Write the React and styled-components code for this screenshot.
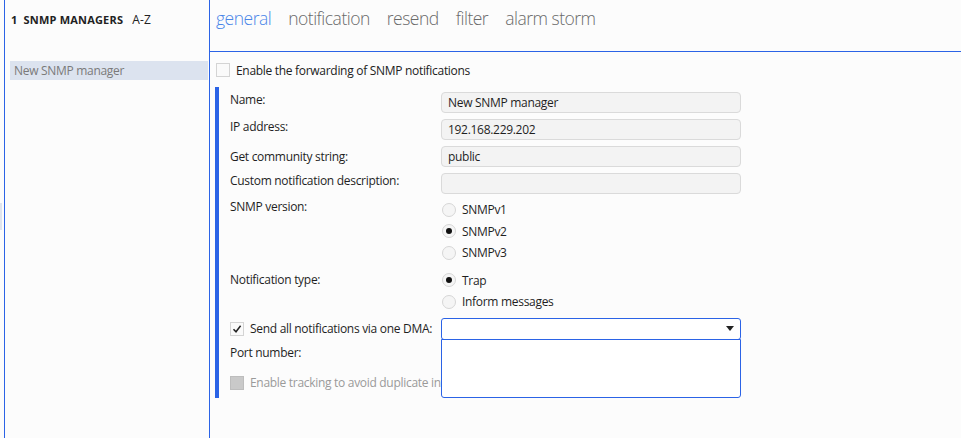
import React from "react";
import styled, { createGlobalStyle } from "styled-components";

const Global = createGlobalStyle`
  html, body { margin: 0; padding: 0; background: #fcfcfc; }
  body { font-family: "Open Sans", "Noto Sans", sans-serif; font-size: 12px; letter-spacing: -0.3px; color: #1f1f1f; }
  * { box-sizing: border-box; }
`;

const BLUE = "#2b63e6";

const Page = styled.div`
  display: flex;
  width: 961px;
  height: 438px;
  overflow: hidden;
  background: #fcfcfc;
`;

const EdgeStrip = styled.div`
  position: relative;
  width: 5px;
  flex: none;
  border-right: 1px solid ${BLUE};
`;

const EdgeSliver = styled.div`
  position: absolute;
  left: 0;
  top: 203px;
  width: 2px;
  height: 27px;
  background: #dfe4ee;
`;

const Sidebar = styled.aside`
  width: 205px;
  flex: none;
  border-right: 1px solid ${BLUE};
  padding: 0 1px 0 5px;
`;

const SideHeader = styled.div`
  height: 41px;
  display: flex;
  align-items: center;
  gap: 6px;
  padding: 0 0 2px 1px;
  font-size: 11px;
  color: #222;
`;

const HeaderStrong = styled.span`
  font-weight: 700;
  letter-spacing: 0.2px;
`;

const HeaderSort = styled.span`
  font-weight: 400;
  margin-left: 3px;
  font-size: 12px;
  letter-spacing: 0.2px;
`;

const SideItem = styled.div`
  margin-top: 20px;
  height: 19px;
  display: flex;
  align-items: center;
  padding-left: 4px;
  background: ${(p) => (p.$selected ? "#dce3ef" : "transparent")};
  color: #7a7a7a;
  font-size: 12px;
`;

const Main = styled.main`
  flex: 1;
  display: flex;
  flex-direction: column;
  min-width: 0;
`;

const Tabs = styled.nav`
  height: 52px;
  flex: none;
  border-bottom: 1px solid ${BLUE};
  display: flex;
  align-items: flex-start;
  gap: 17px;
  padding: 6px 0 0 6px;
`;

const Tab = styled.span`
  font-size: 17.5px;
  font-weight: 300;
  letter-spacing: -0.5px;
  color: ${(p) => (p.$active ? "#4a86e8" : "#6a6a6a")};
`;

const Content = styled.section`
  padding: 11px 0 0 5px;
`;

const EnableRow = styled.label`
  display: flex;
  align-items: center;
  gap: 6px;
  padding-left: 1px;
  height: 14px;
  font-size: 12px;
  color: #222;
`;

const Box = styled.span`
  width: 14px;
  height: 14px;
  flex: none;
  display: inline-flex;
  align-items: center;
  justify-content: center;
  border: 1px solid ${(p) => (p.$disabled ? "#bdbdbd" : "#d4d4d4")};
  background: ${(p) => (p.$disabled ? "#c9c9c9" : "#fafafa")};
`;

const Form = styled.div`
  margin-top: 10px;
  height: 311px;
  border-left: 4px solid ${BLUE};
  padding: 5px 0 0 11px;
  display: flex;
  flex-direction: column;
`;

const Row = styled.div`
  display: grid;
  grid-template-columns: 211px 300px;
  align-items: start;
  margin-bottom: ${(p) => p.$mb ?? 0}px;
`;

const Label = styled.div`
  font-size: 12px;
  line-height: 16px;
  color: #1f1f1f;
  padding-top: ${(p) => p.$pt ?? 0}px;
  white-space: nowrap;
  display: flex;
  align-items: center;
  gap: 6px;
`;

const Input = styled.div`
  height: 21px;
  border: 1px solid #dadada;
  border-radius: 4px;
  background: #f3f3f3;
  display: flex;
  align-items: center;
  padding-left: 6px;
  font-size: 12px;
  color: #1f1f1f;
`;

const RadioList = styled.div`
  display: flex;
  flex-direction: column;
`;

const RadioItem = styled.div`
  height: 21.5px;
  display: flex;
  align-items: center;
  gap: 6px;
  padding-left: 1px;
  font-size: 12px;
  color: #1f1f1f;
`;

const RadioCircle = styled.span`
  width: 14px;
  height: 14px;
  border-radius: 50%;
  border: 1px solid #d6d6d6;
  background: #f5f5f5;
  display: inline-flex;
  align-items: center;
  justify-content: center;
  &::after {
    content: "";
    width: 6px;
    height: 6px;
    border-radius: 50%;
    background: ${(p) => (p.$checked ? "#111" : "transparent")};
  }
`;

const DropWrap = styled.div`
  position: relative;
`;

const Select = styled.div`
  height: 22px;
  border: 1px solid ${BLUE};
  border-radius: 3px;
  background: #fff;
  display: flex;
  align-items: center;
  justify-content: flex-end;
  padding-right: 6px;
`;

const DropList = styled.div`
  position: absolute;
  left: 0;
  top: 21px;
  width: 100%;
  height: 59px;
  border: 1px solid ${BLUE};
  border-radius: 0 0 3px 3px;
  background: #fff;
  z-index: 2;
`;

const DisabledText = styled.span`
  color: #9a9a9a;
`;

const Check = () => (
  <svg width="10" height="10" viewBox="0 0 10 10">
    <path d="M1.5 5.2 L4 7.8 L8.6 1.8" fill="none" stroke="#222" strokeWidth="1.5" />
  </svg>
);

const Caret = () => (
  <svg width="8" height="5" viewBox="0 0 8 5">
    <path d="M0 0 H8 L4 5 Z" fill="#222" />
  </svg>
);

export default function App() {
  return (
    <>
      <Global />
      <Page>
        <EdgeStrip>
          <EdgeSliver />
        </EdgeStrip>
        <Sidebar>
          <SideHeader>
            <HeaderStrong>1</HeaderStrong>
            <HeaderStrong>SNMP MANAGERS</HeaderStrong>
            <HeaderSort>A-Z</HeaderSort>
          </SideHeader>
          <SideItem $selected>New SNMP manager</SideItem>
        </Sidebar>
        <Main>
          <Tabs>
            <Tab $active>general</Tab>
            <Tab>notification</Tab>
            <Tab>resend</Tab>
            <Tab>filter</Tab>
            <Tab>alarm storm</Tab>
          </Tabs>
          <Content>
            <EnableRow>
              <Box />
              Enable the forwarding of SNMP notifications
            </EnableRow>
            <Form>
              <Row $mb={6}>
                <Label>Name:</Label>
                <Input>New SNMP manager</Input>
              </Row>
              <Row $mb={6}>
                <Label>IP address:</Label>
                <Input>192.168.229.202</Input>
              </Row>
              <Row $mb={6}>
                <Label $pt={3}>Get community string:</Label>
                <Input>public</Input>
              </Row>
              <Row $mb={5}>
                <Label>Custom notification description:</Label>
                <Input />
              </Row>
              <Row $mb={6}>
                <Label>SNMP version:</Label>
                <RadioList>
                  <RadioItem><RadioCircle />SNMPv1</RadioItem>
                  <RadioItem><RadioCircle $checked />SNMPv2</RadioItem>
                  <RadioItem><RadioCircle />SNMPv3</RadioItem>
                </RadioList>
              </Row>
              <Row $mb={5}>
                <Label $pt={2}>Notification type:</Label>
                <RadioList>
                  <RadioItem><RadioCircle $checked />Trap</RadioItem>
                  <RadioItem><RadioCircle />Inform messages</RadioItem>
                </RadioList>
              </Row>
              <Row $mb={5}>
                <Label $pt={3}>
                  <Box><Check /></Box>
                  Send all notifications via one DMA:
                </Label>
                <DropWrap>
                  <Select><Caret /></Select>
                  <DropList />
                </DropWrap>
              </Row>
              <Row $mb={14}>
                <Label>Port number:</Label>
              </Row>
              <Row>
                <Label>
                  <Box $disabled />
                  <DisabledText>Enable tracking to avoid duplicate information</DisabledText>
                </Label>
              </Row>
            </Form>
          </Content>
        </Main>
      </Page>
    </>
  );
}
